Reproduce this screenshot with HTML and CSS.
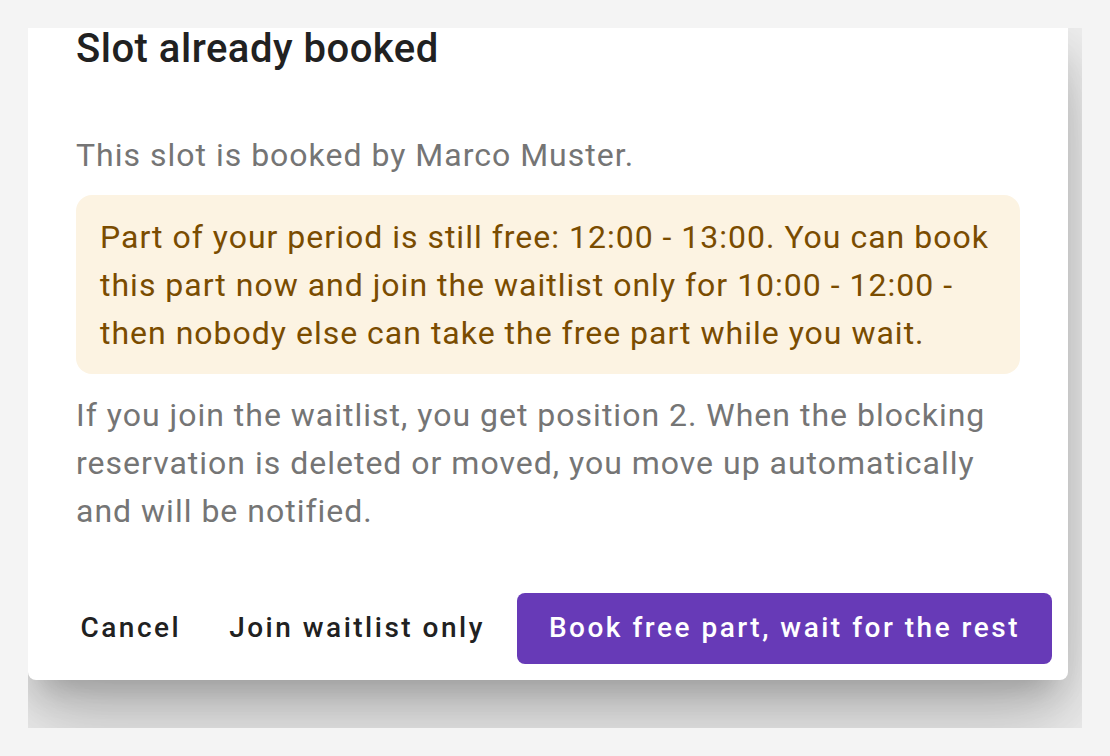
FILE: index.html
```html
<!DOCTYPE html>
<html lang="en">

<head>
    <meta charset="UTF-8">
    <meta name="viewport" content="width=device-width, initial-scale=1.0">
    <title>Slot already booked</title>
    <link rel="stylesheet" href="styles.css">
</head>

<body>
    <div class="frame">
        <div class="dialog" role="dialog" aria-labelledby="dialog-title">
            <h2 id="dialog-title" class="dialog-title">Slot already booked</h2>

            <div class="dialog-content">
                <p>This slot is booked by Marco Muster.</p>
                <div class="notice">
                    Part of your period is still free: 12:00 - 13:00. You can book this part now and join the
                    waitlist only for 10:00 - 12:00 - then nobody else can take the free part while you wait.
                </div>
                <p>If you join the waitlist, you get position 2. When the blocking reservation is deleted or
                    moved, you move up automatically and will be notified.</p>
            </div>

            <div class="dialog-actions">
                <button class="btn btn-text">Cancel</button>
                <button class="btn btn-text">Join waitlist only</button>
                <button class="btn btn-filled">Book free part, wait for the rest</button>
            </div>
        </div>
    </div>
</body>

</html>
```

FILE: styles.css
```css
body {
    margin: 0;
    padding: 0;
    background: #f4f4f4;
    font-family: 'Roboto', 'Liberation Sans', sans-serif;
}

.frame {
    margin: 28px 0 0 28px;
    width: 1054px;
    height: 700px;
    overflow: hidden;
}

.dialog {
    width: 1040px;
    background: #fff;
    border-radius: 0 0 8px 8px;
    box-shadow: 0 22px 30px -14px rgba(0, 0, 0, 0.2),
        0 48px 76px 6px rgba(0, 0, 0, 0.14),
        0 18px 92px 16px rgba(0, 0, 0, 0.12);
}

.dialog-title {
    margin: 0;
    padding: 0 48px;
    font-size: 40px;
    line-height: 42px;
    font-weight: 500;
    letter-spacing: 0.5px;
    color: #212121;
}

.dialog-content {
    padding: 61px 48px 42px;
    font-size: 32px;
    line-height: 48px;
    letter-spacing: 1px;
    color: #757575;
}

.dialog-content p {
    margin: 0;
}

.notice {
    margin: 16px 0 17px;
    padding: 18px 24px 17px;
    background: #fcf3e2;
    border-radius: 16px;
    color: #7a4c00;
}

.dialog-actions {
    display: flex;
    justify-content: flex-end;
    gap: 16px;
    padding: 16px;
}

.btn {
    height: 71px;
    min-width: 128px;
    padding: 0 16px 2px;
    border: none;
    border-radius: 8px;
    font-family: inherit;
    font-size: 28px;
    font-weight: 500;
    letter-spacing: 2.5px;
    cursor: pointer;
}

.btn-text {
    background: transparent;
    color: #212121;
}

.btn-filled {
    padding: 0 32px 2px;
    background: #673ab7;
    color: #fff;
}
```
